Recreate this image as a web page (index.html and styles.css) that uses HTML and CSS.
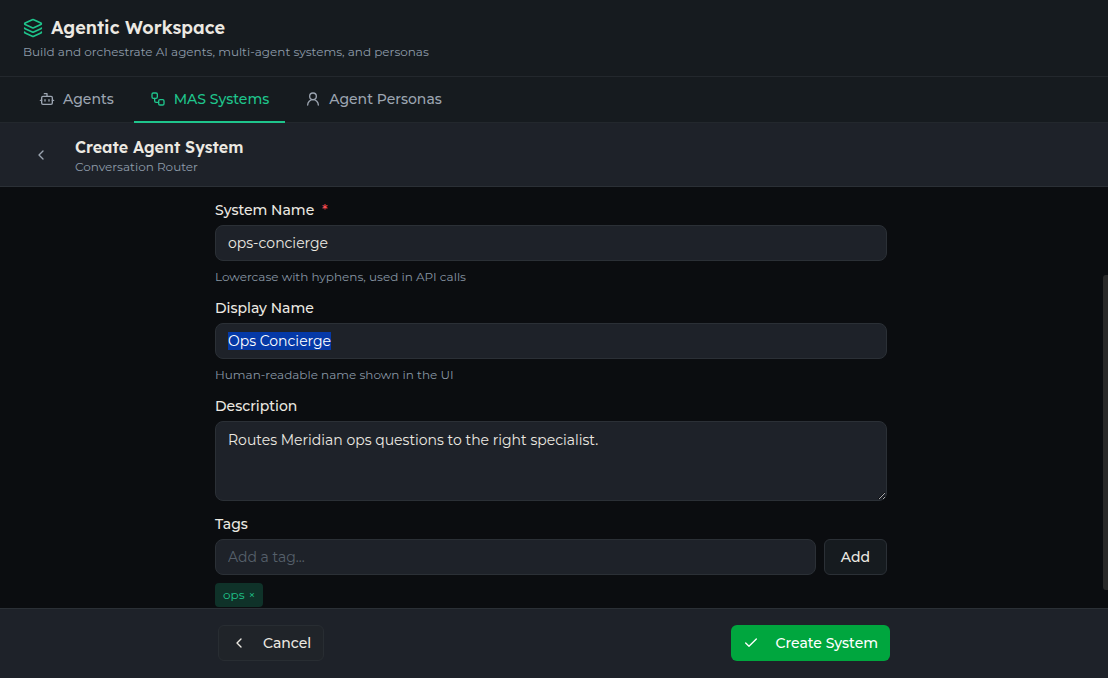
FILE: index.html
```html
<!DOCTYPE html>
<html lang="en">
<head>
<meta charset="utf-8">
<meta name="viewport" content="width=device-width, initial-scale=1">
<title>Agentic Workspace</title>
<link rel="stylesheet" href="styles.css">
</head>
<body>
<div class="app">
  <header class="header">
    <div class="brand">
      <svg class="icon brand-icon" viewBox="0 0 24 24" aria-hidden="true"><path d="M12.83 2.18a2 2 0 0 0-1.66 0L2.6 6.08a1 1 0 0 0 0 1.83l8.58 3.91a2 2 0 0 0 1.66 0l8.58-3.9a1 1 0 0 0 0-1.83z"/><path d="M2 12a1 1 0 0 0 .58.91l8.6 3.91a2 2 0 0 0 1.65 0l8.58-3.9A1 1 0 0 0 22 12"/><path d="M2 17a1 1 0 0 0 .58.91l8.6 3.91a2 2 0 0 0 1.65 0l8.58-3.9A1 1 0 0 0 22 17"/></svg>
      <h1 class="brand-title">Agentic Workspace</h1>
    </div>
    <p class="brand-text">Build and orchestrate AI agents, multi-agent systems, and personas</p>
  </header>

  <nav class="tabs">
    <button class="tab" type="button">
      <svg class="icon" viewBox="0 0 24 24" aria-hidden="true"><path d="M12 8V4H8"/><rect x="4" y="8" width="16" height="12" rx="2"/><path d="M2 14h2M20 14h2M15 13v2M9 13v2"/></svg>
      Agents
    </button>
    <button class="tab tab-active" type="button">
      <svg class="icon" viewBox="0 0 24 24" aria-hidden="true"><rect x="3" y="3" width="8" height="8" rx="2"/><path d="M7 11v4a2 2 0 0 0 2 2h4"/><rect x="13" y="13" width="8" height="8" rx="2"/></svg>
      MAS Systems
    </button>
    <button class="tab" type="button">
      <svg class="icon" viewBox="0 0 24 24" aria-hidden="true"><circle cx="12" cy="8" r="5"/><path d="M20 21a8 8 0 0 0-16 0"/></svg>
      Agent Personas
    </button>
  </nav>

  <div class="subheader">
    <button class="back" type="button" aria-label="Back">
      <svg class="icon" viewBox="0 0 24 24" aria-hidden="true"><path d="m15 18-6-6 6-6"/></svg>
    </button>
    <div>
      <h2 class="subheader-title">Create Agent System</h2>
      <p class="subheader-text">Conversation Router</p>
    </div>
  </div>

  <main class="main">
    <form class="form" id="system-form">
      <div class="field">
        <label class="label" for="system-name">System Name <span class="required">*</span></label>
        <input class="input" id="system-name" type="text" value="ops-concierge">
        <p class="hint">Lowercase with hyphens, used in API calls</p>
      </div>
      <div class="field">
        <label class="label" for="display-name">Display Name</label>
        <input class="input" id="display-name" type="text" value="Ops Concierge" autofocus>
        <p class="hint">Human-readable name shown in the UI</p>
      </div>
      <div class="field">
        <label class="label" for="description">Description</label>
        <textarea class="input textarea" id="description">Routes Meridian ops questions to the right specialist.</textarea>
      </div>
      <div class="field">
        <label class="label" for="tag">Tags</label>
        <div class="tag-row">
          <input class="input" id="tag" type="text" placeholder="Add a tag...">
          <button class="button button-add" type="button">Add</button>
        </div>
        <div class="tag-list">
          <span class="tag">ops <button class="tag-remove" type="button" aria-label="Remove ops">×</button></span>
        </div>
      </div>
    </form>
    <div class="scroll-thumb"></div>
  </main>

  <footer class="footer">
    <div class="actions">
      <button class="button button-cancel" type="button">
        <svg class="icon" viewBox="0 0 24 24" aria-hidden="true"><path d="m15 18-6-6 6-6"/></svg>
        Cancel
      </button>
      <button class="button button-create" type="submit" form="system-form">
        <svg class="icon" viewBox="0 0 24 24" aria-hidden="true"><path d="M20 6 9 17l-5-5"/></svg>
        Create System
      </button>
    </div>
  </footer>
</div>
<script src="main.js"></script>
</body>
</html>
```

FILE: styles.css
```css
* {
  box-sizing: border-box;
}

body,
h1,
h2,
p {
  margin: 0;
}

body {
  background: #0b0d10;
  color: #ece9e2;
  font-family: Montserrat, Inter, "Liberation Sans", sans-serif;
  font-size: 14px;
}

button,
input,
textarea {
  font: inherit;
  color: inherit;
}

button {
  cursor: pointer;
}

.app {
  display: flex;
  flex-direction: column;
  height: 100vh;
}

.icon {
  width: 16px;
  height: 16px;
  flex: none;
  fill: none;
  stroke: currentColor;
  stroke-width: 2;
  stroke-linecap: round;
  stroke-linejoin: round;
}

.header {
  padding: 14px 23px 15px;
  background: #161b1f;
  border-bottom: 1px solid #23282d;
}

.brand {
  display: flex;
  align-items: center;
  gap: 8px;
}

.brand-icon {
  width: 20px;
  height: 20px;
  color: #1fc58c;
}

.brand-title {
  font-family: Lexend, Inter, "Liberation Sans", sans-serif;
  font-size: 18px;
  font-weight: 600;
  line-height: 28px;
}

.brand-text {
  color: #8e9caa;
  font-size: 12px;
  line-height: 19px;
}

.tabs {
  display: flex;
  gap: 4px;
  padding: 0 23px;
  background: #161b1f;
  border-bottom: 1px solid #23282d;
}

.tab {
  display: flex;
  align-items: center;
  gap: 8px;
  margin-bottom: -1px;
  padding: 12px 16px;
  border: 0;
  border-bottom: 2px solid transparent;
  background: none;
  color: #9ca5b1;
  font-weight: 500;
  line-height: 20px;
}

.tab-active {
  border-bottom-color: #1fc58c;
  color: #1fc58c;
}

.subheader {
  display: flex;
  align-items: center;
  gap: 16px;
  padding: 12px 23px 11px;
  background: #1e2229;
  border-bottom: 1px solid #2b3036;
}

.back {
  display: grid;
  place-items: center;
  width: 36px;
  height: 36px;
  padding: 0;
  border: 0;
  background: none;
  color: #9ca5b1;
}

.subheader-title {
  font-family: Lexend, Inter, "Liberation Sans", sans-serif;
  font-size: 16px;
  font-weight: 600;
  line-height: 24px;
}

.subheader-text {
  color: #8e9caa;
  font-size: 12px;
  line-height: 16px;
}

.main {
  position: relative;
  flex: 1;
  min-height: 0;
  overflow: hidden;
  padding: 16px 6px 0 0;
}

.form {
  display: flex;
  flex-direction: column;
  gap: 16px;
  max-width: 672px;
  margin: 0 auto;
}

.field {
  display: flex;
  flex-direction: column;
  gap: 8px;
}

.label {
  font-weight: 500;
  line-height: 14px;
}

.required {
  margin-left: 4px;
  color: #fb4b50;
}

.input {
  width: 100%;
  height: 36px;
  padding: 0 12px;
  border: 1px solid #2b3036;
  border-radius: 8px;
  outline: 0;
  background: #1e2229;
}

.input::placeholder {
  color: #56606b;
}

.input::selection {
  background: #0539a7;
  color: #fff;
}

.textarea {
  display: block;
  height: 80px;
  padding: 8px 12px;
  line-height: 20px;
  resize: vertical;
}

.hint {
  color: #8795a3;
  font-size: 12px;
  line-height: 16px;
}

.tag-row {
  display: flex;
  gap: 8px;
}

.button {
  display: flex;
  align-items: center;
  gap: 16px;
  height: 36px;
  padding: 0 12px;
  border: 1px solid #2b3036;
  border-radius: 6px;
  font-weight: 500;
}

.button-add {
  padding: 0 16px;
  background: #161b1f;
}

.tag-list {
  display: flex;
  gap: 8px;
}

.tag {
  display: flex;
  align-items: center;
  gap: 4px;
  padding: 4px 8px;
  border-radius: 4px;
  background: #0f3229;
  color: #1fc58c;
  font-size: 12px;
  line-height: 16px;
}

.tag-remove {
  padding: 0;
  border: 0;
  background: none;
}

.scroll-thumb {
  position: absolute;
  top: 88px;
  right: 0;
  bottom: 18px;
  width: 5px;
  border-radius: 3px 0 0 3px;
  background: #292929;
}

.footer {
  padding: 16px 0 17px;
  background: #1e2229;
  border-top: 1px solid #2b3036;
}

.actions {
  display: flex;
  justify-content: space-between;
  max-width: 672px;
  margin: 0 auto;
}

.button-cancel {
  background: #202429;
  border-color: #282d32;
}

.button-create {
  border: 0;
  background: #00a63e;
  color: #fff;
}
```

FILE: main.js
```js
const displayName = document.getElementById("display-name");
displayName.focus();
displayName.select();
```
